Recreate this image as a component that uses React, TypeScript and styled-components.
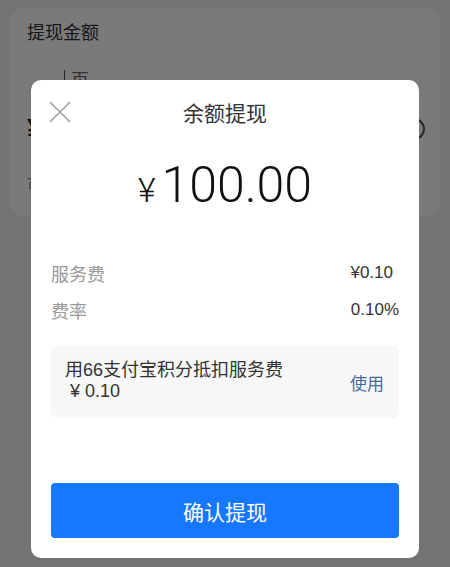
import React from 'react';
import styled, { createGlobalStyle } from 'styled-components';

const GlobalStyle = createGlobalStyle`
  html, body {
    margin: 0;
    padding: 0;
    background: #f0f0f0;
  }
  body {
    font-family: "Liberation Sans", "Noto Sans CJK SC", sans-serif;
    color: #333;
  }
`;

const Page = styled.div`
  position: relative;
  width: 450px;
  height: 567px;
  overflow: hidden;
  padding: 8px 10px;
  box-sizing: border-box;
`;

const Card = styled.div`
  background: #fff;
  border-radius: 12px;
  height: 208px;
  padding: 13px 17px;
  box-sizing: border-box;
  display: flex;
  flex-direction: column;
`;

const CardLabel = styled.div`
  font-size: 18px;
  line-height: 24px;
  color: #333;
`;

const Hint = styled.div`
  margin: 25px 0 0 37px;
  padding-left: 6px;
  border-left: 1px solid #555;
  font-size: 18px;
  line-height: 22px;
  color: #666;
`;

const AmountInputRow = styled.div`
  margin-top: 17px;
  display: flex;
  align-items: center;
  justify-content: space-between;
  height: 40px;
`;

const Yen = styled.span`
  font-size: 30px;
  font-weight: bold;
  color: #222;
`;

const ClearIcon = styled.span`
  width: 18px;
  height: 18px;
  border-radius: 50%;
  border: 2px solid #555;
  margin-right: -2px;
`;

const Balance = styled.div`
  margin-top: 24px;
  font-size: 15px;
  color: #777;
`;

const Overlay = styled.div`
  position: absolute;
  inset: 0;
  background: rgba(0, 0, 0, 0.52);
  display: flex;
  justify-content: center;
  align-items: flex-end;
  padding-bottom: 9px;
  box-sizing: border-box;
`;

const Modal = styled.div`
  width: 388px;
  height: 478px;
  background: #fff;
  border-radius: 10px;
  padding: 0 20px 20px;
  box-sizing: border-box;
  display: flex;
  flex-direction: column;
`;

const Header = styled.div`
  position: relative;
  height: 64px;
  display: flex;
  align-items: center;
  justify-content: center;
  margin: 0 -20px;
`;

const Title = styled.div`
  font-size: 21px;
  color: #333;
`;

const CloseButton = styled.button`
  position: absolute;
  left: 17px;
  top: 20px;
  width: 24px;
  height: 24px;
  padding: 0;
  border: none;
  background: transparent;
  display: flex;
  align-items: center;
  justify-content: center;
`;

const Amount = styled.div`
  margin-top: 11px;
  height: 60px;
  line-height: 60px;
  display: flex;
  align-items: baseline;
  justify-content: center;
  font-family: Roboto, "Liberation Sans", sans-serif;
  font-weight: 300;
  color: #111;
`;

const AmountSign = styled.span`
  font-size: 34px;
  margin-right: 6px;
`;

const AmountValue = styled.span`
  font-size: 50px;
`;

const InfoList = styled.div`
  margin-top: 46px;
  display: flex;
  flex-direction: column;
  gap: 13px;
`;

const InfoRow = styled.div`
  display: flex;
  justify-content: space-between;
  align-items: center;
  height: 24px;
  font-size: 17px;
`;

const InfoLabel = styled.span`
  color: #999;
  font-size: 18px;
`;

const InfoValue = styled.span<{ $inset?: number }>`
  color: #333;
  margin-right: ${(p) => p.$inset ?? 0}px;
`;

const PointsBox = styled.div`
  margin-top: 24px;
  height: 72px;
  background: #f7f7f7;
  border-radius: 6px;
  padding: 0 15px 0 14px;
  display: flex;
  align-items: center;
  justify-content: space-between;
`;

const PointsText = styled.div`
  font-size: 18px;
  line-height: 21px;
  color: #333;
  margin-top: -3px;
`;

const PointsAction = styled.span`
  font-size: 17px;
  color: #45699a;
`;

const Spacer = styled.div`
  flex: 1;
`;

const ConfirmButton = styled.button`
  height: 55px;
  width: 100%;
  border: none;
  border-radius: 4px;
  background: #1677ff;
  color: #fff;
  font-family: inherit;
  font-size: 21px;
`;

export default function App() {
  return (
    <>
      <GlobalStyle />
      <Page>
        <Card>
          <CardLabel>提现金额</CardLabel>
          <Hint>页</Hint>
          <AmountInputRow>
            <Yen>¥</Yen>
            <ClearIcon />
          </AmountInputRow>
          <Balance>可提现余额 ¥100.00</Balance>
        </Card>
        <Overlay>
          <Modal>
            <Header>
              <CloseButton aria-label="关闭">
                <svg width="22" height="22" viewBox="0 0 22 22">
                  <path d="M1 1L21 21M21 1L1 21" stroke="#a0a0a0" strokeWidth="1.6" fill="none" />
                </svg>
              </CloseButton>
              <Title>余额提现</Title>
            </Header>
            <Amount>
              <AmountSign>¥</AmountSign>
              <AmountValue>100.00</AmountValue>
            </Amount>
            <InfoList>
              <InfoRow>
                <InfoLabel>服务费</InfoLabel>
                <InfoValue $inset={6}>¥0.10</InfoValue>
              </InfoRow>
              <InfoRow>
                <InfoLabel>费率</InfoLabel>
                <InfoValue>0.10%</InfoValue>
              </InfoRow>
            </InfoList>
            <PointsBox>
              <PointsText>
                用66支付宝积分抵扣服务费
                <br />
                &nbsp;¥ 0.10
              </PointsText>
              <PointsAction>使用</PointsAction>
            </PointsBox>
            <Spacer />
            <ConfirmButton>确认提现</ConfirmButton>
          </Modal>
        </Overlay>
      </Page>
    </>
  );
}
